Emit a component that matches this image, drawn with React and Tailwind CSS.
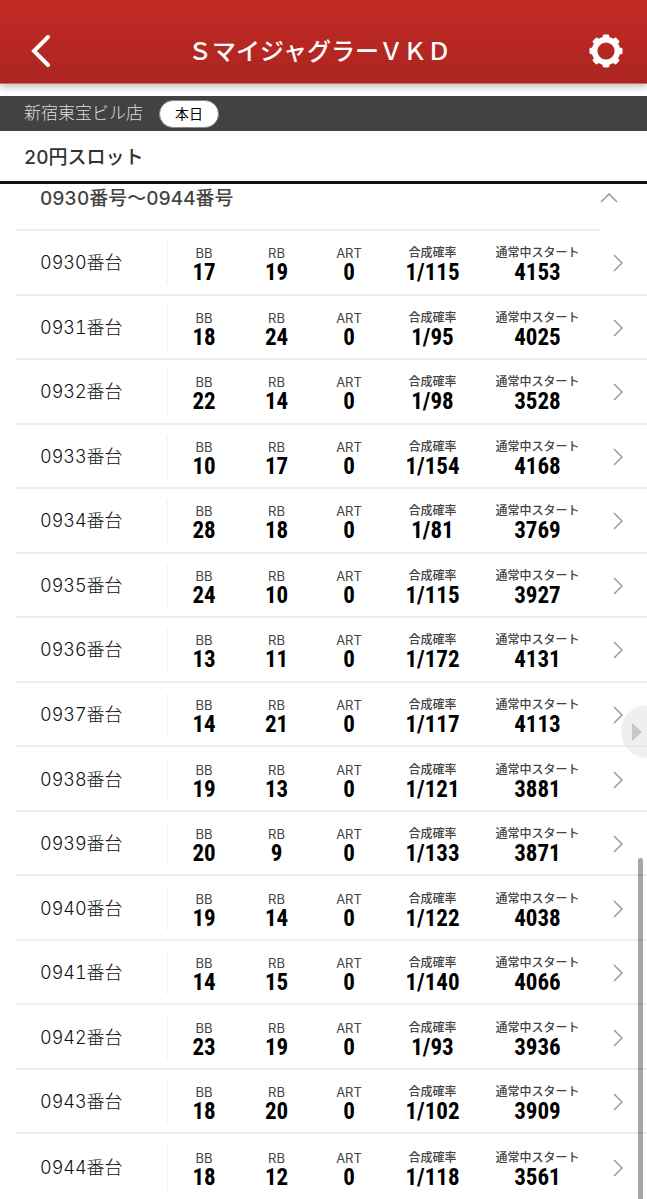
import React from 'react';

const machines = [
  { no: '0930', bb: 17, rb: 19, art: 0, rate: '1/115', start: 4153 },
  { no: '0931', bb: 18, rb: 24, art: 0, rate: '1/95', start: 4025 },
  { no: '0932', bb: 22, rb: 14, art: 0, rate: '1/98', start: 3528 },
  { no: '0933', bb: 10, rb: 17, art: 0, rate: '1/154', start: 4168 },
  { no: '0934', bb: 28, rb: 18, art: 0, rate: '1/81', start: 3769 },
  { no: '0935', bb: 24, rb: 10, art: 0, rate: '1/115', start: 3927 },
  { no: '0936', bb: 13, rb: 11, art: 0, rate: '1/172', start: 4131 },
  { no: '0937', bb: 14, rb: 21, art: 0, rate: '1/117', start: 4113 },
  { no: '0938', bb: 19, rb: 13, art: 0, rate: '1/121', start: 3881 },
  { no: '0939', bb: 20, rb: 9, art: 0, rate: '1/133', start: 3871 },
  { no: '0940', bb: 19, rb: 14, art: 0, rate: '1/122', start: 4038 },
  { no: '0941', bb: 14, rb: 15, art: 0, rate: '1/140', start: 4066 },
  { no: '0942', bb: 23, rb: 19, art: 0, rate: '1/93', start: 3936 },
  { no: '0943', bb: 18, rb: 20, art: 0, rate: '1/102', start: 3909 },
  { no: '0944', bb: 18, rb: 12, art: 0, rate: '1/118', start: 3561 },
];

const GearIcon = () => (
  <svg viewBox="-17 -17 34 34" className="w-[34px] h-[34px]" fill="none" stroke="currentColor" aria-hidden="true">
    <circle r="11.4" strokeWidth="5.6" />
    {[0, 45, 90, 135, 180, 225, 270, 315].map((angle) => (
      <rect key={angle} x="-3.3" y="-16.5" width="6.6" height="6" rx="1.4" fill="currentColor" stroke="none" transform={`rotate(${angle})`} />
    ))}
  </svg>
);

const Stat = ({ label, value, latin = false }) => (
  <div className="text-center whitespace-nowrap">
    <dt className={latin ? 'text-[13px] leading-4 text-[#444]' : 'text-[12px] leading-4 font-medium text-[#444]'}>{label}</dt>
    <dd className="font-['Roboto_Condensed',Roboto,sans-serif] text-[23px] leading-6 font-bold text-black">{value}</dd>
  </div>
);

const MachineRow = ({ machine }) => (
  <li className="border-b-2 border-[#eee] last:border-b-0">
    <a href={`#${machine.no}`} className="flex items-center h-full pt-[2px]">
      <span className="w-[151px] shrink-0 pl-6 text-lg leading-6 font-light tabular-nums text-[#111]">{machine.no}番台</span>
      <dl className="grid grid-cols-[72fr_73fr_72fr_95fr_115fr] flex-1 border-l border-[#f2f2f2] pt-1">
        <Stat label="BB" value={machine.bb} latin />
        <Stat label="RB" value={machine.rb} latin />
        <Stat label="ART" value={machine.art} latin />
        <Stat label="合成確率" value={machine.rate} />
        <Stat label="通常中スタート" value={machine.start} />
      </dl>
      <span className="w-[52px] shrink-0 pl-[18px] text-[#999]">
        <svg viewBox="0 0 10 18" className="w-[10px] h-[18px]" fill="none" stroke="currentColor" strokeWidth="1.5" aria-hidden="true">
          <path d="M1 1l8 8-8 8" />
        </svg>
      </span>
    </a>
  </li>
);

const App = () => {
  return (
    <div className="min-h-screen flex flex-col bg-white font-[Inter,'Noto_Sans_CJK_JP',sans-serif]" lang="ja">
      {/* Header */}
      <header className="flex items-center h-[84px] pt-[18px] pl-7 pr-6 bg-linear-to-b from-[#c42a24] to-[#ab2521] border-b border-[#c4706d] shadow-[0_2px_8px_rgba(0,0,0,0.3)] text-white">
        <button type="button" aria-label="戻る" className="w-[34px] flex justify-start pl-[2px]">
          <svg viewBox="0 0 20 34" className="w-[20px] h-[34px]" fill="none" stroke="currentColor" strokeWidth="4" strokeLinecap="round" aria-hidden="true">
            <path d="M18 3L4 17L18 31" />
          </svg>
        </button>
        <h1 className="flex-1 pt-[2px] pr-3 text-center text-2xl font-medium">ＳマイジャグラーＶＫＤ</h1>
        <button type="button" aria-label="設定">
          <GearIcon />
        </button>
      </header>

      {/* Shop */}
      <div className="flex items-center gap-4 h-[35px] mt-3 pl-6 bg-[#424242]">
        <span className="text-[17px] font-light text-[#ddd]">新宿東宝ビル店</span>
        <button type="button" className="w-[60px] h-[28px] rounded-full border border-[#888] bg-white text-sm text-black">本日</button>
      </div>
      <h2 className="h-[53px] pl-6 border-b-[3px] border-[#111] text-[19px] leading-[54px] font-medium tabular-nums text-[#333]">20円スロット</h2>

      {/* Machine list */}
      <section className="flex-1 flex flex-col pl-4">
        <button type="button" aria-expanded="true" className="flex justify-between h-[47px] pl-6 pt-[3px] mr-[47px] border-b-2 border-[#eee] text-left">
          <span className="text-[19px] leading-6 font-medium tabular-nums text-[#444]">0930番号〜0944番号</span>
          <svg viewBox="0 0 18 10" className="w-[18px] h-[10px] mt-[6px] -mr-[18px] text-[#999]" fill="none" stroke="currentColor" strokeWidth="1.5" aria-hidden="true">
            <path d="M1 9l8-8 8 8" />
          </svg>
        </button>
        <ul className="flex-1 grid auto-rows-fr">
          {machines.map((machine) => (
            <MachineRow key={machine.no} machine={machine} />
          ))}
        </ul>
      </section>

      {/* Side drawer handle and scroll position */}
      <button type="button" aria-label="メニューを開く" className="fixed right-0 top-[705px] w-[26px] h-[53px] pl-[11px] rounded-l-full bg-[#e4e4e4]/60 text-[#c8c8c8]">
        <svg viewBox="0 0 10 18" className="w-[10px] h-[18px]" fill="currentColor" aria-hidden="true">
          <path d="M0 0l10 9-10 9z" />
        </svg>
      </button>
      <div className="fixed right-1 top-[858px] bottom-0 w-[5px] rounded-t-full bg-black/35" />
    </div>
  );
};

export default App;
